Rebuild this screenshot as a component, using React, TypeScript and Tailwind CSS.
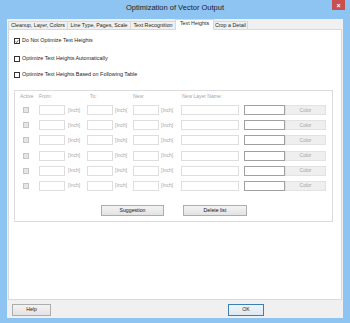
export default function App() {
  const rows = [0, 1, 2, 3, 4, 5];
  const tabs = [
    { label: "Cleanup, Layer, Colors", w: "w-[60px]" },
    { label: "Line Type, Pages, Scale", w: "w-[64px]" },
    { label: "Text Recognition", w: "w-[46px]" },
  ];

  return (
    <div className="w-[350px] h-[323px] bg-[#8ec4f2] flex flex-col font-['Liberation_Sans',Arial,sans-serif] text-[#1e1e1e] overflow-hidden">
      {/* title bar */}
      <div className="relative h-[19px] flex items-center justify-center">
        <span className="text-[7.5px] leading-none text-[#222] -mt-[4px]">Optimization of Vector Output</span>
        <div className="absolute right-[5px] top-0 w-[13px] h-[10px] bg-[#c75050] flex items-center justify-center">
          <span className="text-white text-[7px] leading-none font-bold">×</span>
        </div>
      </div>

      <div className="mx-[7px] mb-[5px] flex-1 bg-[#f0f0f0] flex flex-col">
        {/* tabs */}
        <div className="h-[10px] flex items-end pl-[1px]">
          {tabs.map((t) => (
            <div
              key={t.label}
              className={`${t.w} h-[8px] border border-b-0 border-[#d9d9d9] bg-[#f0f0f0] -ml-px first:ml-0 flex items-center justify-center text-[5.3px] leading-none whitespace-nowrap`}
            >
              {t.label}
            </div>
          ))}
          <div className="w-[39px] h-[11px] -ml-px -mb-px relative z-10 border border-b-0 border-[#d9d9d9] bg-white flex items-center justify-center text-[5.3px] leading-none whitespace-nowrap pb-[2px]">
            Text Heights
          </div>
          <div className="w-[35px] h-[8px] border border-b-0 border-[#d9d9d9] bg-[#f0f0f0] -ml-px flex items-center justify-center text-[5.3px] leading-none whitespace-nowrap">
            Crop a Detail
          </div>
        </div>

        {/* panel */}
        <div className="relative mx-[1px] h-[271px] bg-white border border-[#d9d9d9] pl-[5px] pt-[8px] flex flex-col">
          <span className="absolute left-[15px] top-[16px] text-[7px] leading-none tracking-[2px] text-[#f8f8f8]">SOFTPEDIA</span>

          <label className="relative h-[6px] flex items-center gap-[2px] text-[5.4px] leading-none">
            <span className="w-[6px] h-[6px] border border-[#333] bg-white flex items-center justify-center">
              <svg viewBox="0 0 6 6" className="w-[5px] h-[5px]">
                <path d="M1 3 L2.4 4.5 L5 1.2" fill="none" stroke="#222" strokeWidth="1.1" />
              </svg>
            </span>
            Do Not Optimize Text Heights
          </label>
          <label className="relative mt-[12px] h-[6px] flex items-center gap-[2px] text-[5.4px] leading-none">
            <span className="w-[6px] h-[6px] border border-[#333] bg-white" />
            Optimize Text Heights Automatically
          </label>
          <label className="relative mt-[10px] h-[6px] flex items-center gap-[2px] text-[5.4px] leading-none">
            <span className="w-[6px] h-[6px] border border-[#333] bg-white" />
            Optimize Text Heights Based on Following Table
          </label>

          {/* group box */}
          <div className="mt-[12px] w-[319px] h-[132px] border border-[#dcdcdc] flex flex-col text-[5px] leading-none text-[#a6a6a6]">
            <div className="mt-[2px] h-[6px] flex items-center">
              <span className="w-[24px] pl-[5px]">Active</span>
              <span className="w-[48px]">From:</span>
              <span className="w-[46px] pl-[3px]">To:</span>
              <span className="w-[48px]">New:</span>
              <span className="pl-[1px]">New Layer Name:</span>
            </div>

            <div className="mt-[6px] flex flex-col gap-[5.2px]">
              {rows.map((r) => (
                <div key={r} className="h-[10px] flex items-center">
                  <span className="ml-[8px] w-[6px] h-[6px] border border-[#c4c4c4] bg-[#e6e6e6]" />
                  <span className="w-[10px]" />
                  <span className="w-[26px] h-[10px] border border-[#dedede] bg-white" />
                  <span className="w-[22px] pl-[3px]">[Inch]</span>
                  <span className="w-[26px] h-[10px] border border-[#dedede] bg-white" />
                  <span className="w-[20px] pl-[2px]">[Inch]</span>
                  <span className="w-[26px] h-[10px] border border-[#dedede] bg-white" />
                  <span className="w-[22px] pl-[2px]">[Inch]</span>
                  <span className="w-[58px] h-[10px] border border-[#dedede] bg-white" />
                  <span className="w-[5px]" />
                  <span className="w-[41px] h-[10px] border border-[#a0a0a0] bg-white" />
                  <span className="w-[41px] h-[10px] border border-[#e2e2e2] bg-[#efefef] flex items-center justify-center">
                    Color
                  </span>
                </div>
              ))}
            </div>

            <div className="mt-[14px] ml-[86px] flex gap-[19px] text-[5.2px] text-[#111]">
              <button className="w-[63px] h-[11px] border border-[#adadad] bg-gradient-to-b from-[#f3f3f3] to-[#e3e3e3] flex items-center justify-center leading-none">
                Suggestion
              </button>
              <button className="w-[64px] h-[11px] border border-[#adadad] bg-gradient-to-b from-[#f3f3f3] to-[#e3e3e3] flex items-center justify-center leading-none">
                Delete list
              </button>
            </div>
          </div>
        </div>

        {/* bottom buttons */}
        <div className="flex items-start pt-[4px] text-[5.2px]">
          <button className="ml-[5px] w-[39px] h-[12px] border border-[#adadad] bg-gradient-to-b from-[#f3f3f3] to-[#e3e3e3] flex items-center justify-center leading-none">
            Help
          </button>
          <button className="ml-[177px] w-[36px] h-[12px] border border-[#3c7fb1] bg-gradient-to-b from-[#eef4f9] to-[#dfe9f3] flex items-center justify-center leading-none">
            OK
          </button>
        </div>
      </div>
    </div>
  );
}
